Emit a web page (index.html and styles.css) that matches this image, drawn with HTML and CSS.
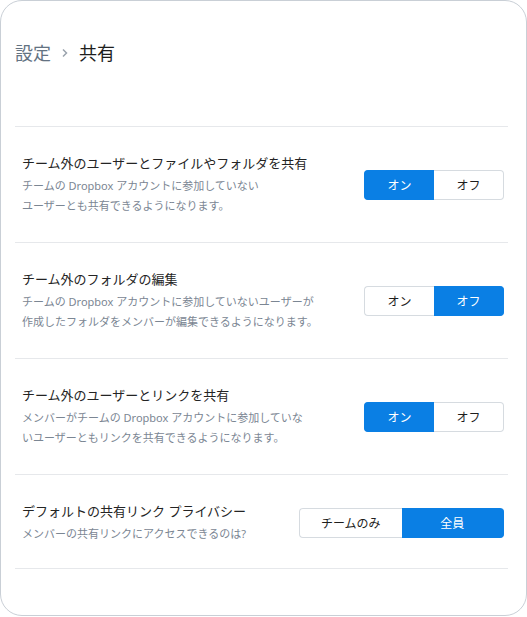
FILE: index.html
```html
<!DOCTYPE html>
<html lang="ja">
<head>
    <meta charset="UTF-8">
    <meta name="viewport" content="width=device-width, initial-scale=1.0">
    <title>共有の設定</title>
    <link rel="stylesheet" href="styles.css">
</head>
<body>
    <div class="settings-card">
        <div class="breadcrumb">
            <span class="crumb-parent">設定</span>
            <svg class="crumb-sep" width="8" height="12" viewBox="0 0 8 12">
                <path d="M2 2.5 L5.5 6 L2 9.5" fill="none" stroke="#9aa3ad" stroke-width="1.5"/>
            </svg>
            <span class="crumb-current">共有</span>
        </div>

        <div class="settings-list">
            <div class="setting-row">
                <div class="setting-text">
                    <div class="setting-title">チーム外のユーザーとファイルやフォルダを共有</div>
                    <div class="setting-desc">チームの Dropbox アカウントに参加していない<br>ユーザーとも共有できるようになります。</div>
                </div>
                <div class="toggle">
                    <button class="toggle-btn active">オン</button>
                    <button class="toggle-btn">オフ</button>
                </div>
            </div>

            <div class="setting-row">
                <div class="setting-text">
                    <div class="setting-title">チーム外のフォルダの編集</div>
                    <div class="setting-desc">チームの Dropbox アカウントに参加していないユーザーが<br>作成したフォルダをメンバーが編集できるようになります。</div>
                </div>
                <div class="toggle">
                    <button class="toggle-btn">オン</button>
                    <button class="toggle-btn active">オフ</button>
                </div>
            </div>

            <div class="setting-row">
                <div class="setting-text">
                    <div class="setting-title">チーム外のユーザーとリンクを共有</div>
                    <div class="setting-desc">メンバーがチームの Dropbox アカウントに参加していな<br>いユーザーともリンクを共有できるようになります。</div>
                </div>
                <div class="toggle">
                    <button class="toggle-btn active">オン</button>
                    <button class="toggle-btn">オフ</button>
                </div>
            </div>

            <div class="setting-row">
                <div class="setting-text">
                    <div class="setting-title">デフォルトの共有リンク プライバシー</div>
                    <div class="setting-desc">メンバーの共有リンクにアクセスできるのは?</div>
                </div>
                <div class="toggle toggle-wide">
                    <button class="toggle-btn">チームのみ</button>
                    <button class="toggle-btn active">全員</button>
                </div>
            </div>
        </div>
    </div>
</body>
</html>
```

FILE: styles.css
```css
/* Reset and Base Styles */
* {
    margin: 0;
    padding: 0;
    box-sizing: border-box;
}

body {
    font-family: "Noto Sans", "Noto Sans CJK JP", sans-serif;
    background-color: #ffffff;
    color: #1e1e1e;
}

/* Card */
.settings-card {
    width: 527px;
    height: 616px;
    border: 1px solid #c9cfd6;
    border-radius: 22px;
    padding: 0 18px 0 14px;
    background: white;
}

/* Breadcrumb */
.breadcrumb {
    display: flex;
    align-items: center;
    gap: 9px;
    height: 125px;
    padding-bottom: 21px;
    font-size: 18px;
    line-height: 24px;
}

.crumb-parent {
    color: #637282;
}

.crumb-sep {
    margin: 0 1px;
}

.crumb-current {
    color: #1e1e1e;
}

/* Settings rows */
.settings-list {
    border-bottom: 1px solid #e6e8eb;
}

.setting-row {
    display: flex;
    justify-content: space-between;
    align-items: center;
    border-top: 1px solid #e6e8eb;
    padding: 26px 4px 26px 7px;
}

.setting-row:last-child {
    padding-bottom: 24px;
}

.setting-title {
    font-size: 13px;
    line-height: 20px;
    color: #242424;
    margin-bottom: 3px;
}

.setting-desc {
    font-size: 11px;
    line-height: 20px;
    color: #7b8693;
}

/* Segmented toggle */
.toggle {
    display: flex;
    width: 140px;
    height: 30px;
    flex-shrink: 0;
}

.toggle-wide {
    width: 205px;
}

.toggle-btn {
    flex: 1;
    font-family: inherit;
    font-size: 12px;
    color: #1e1e1e;
    background: white;
    border: 1px solid #d6dbe0;
    cursor: pointer;
}

.toggle-btn:first-child {
    border-radius: 4px 0 0 4px;
    border-right: none;
}

.toggle-btn:last-child {
    border-radius: 0 4px 4px 0;
    border-left: none;
}

.toggle-btn.active {
    background-color: #0a7fe4;
    border-color: #0a7fe4;
    color: white;
}
```
